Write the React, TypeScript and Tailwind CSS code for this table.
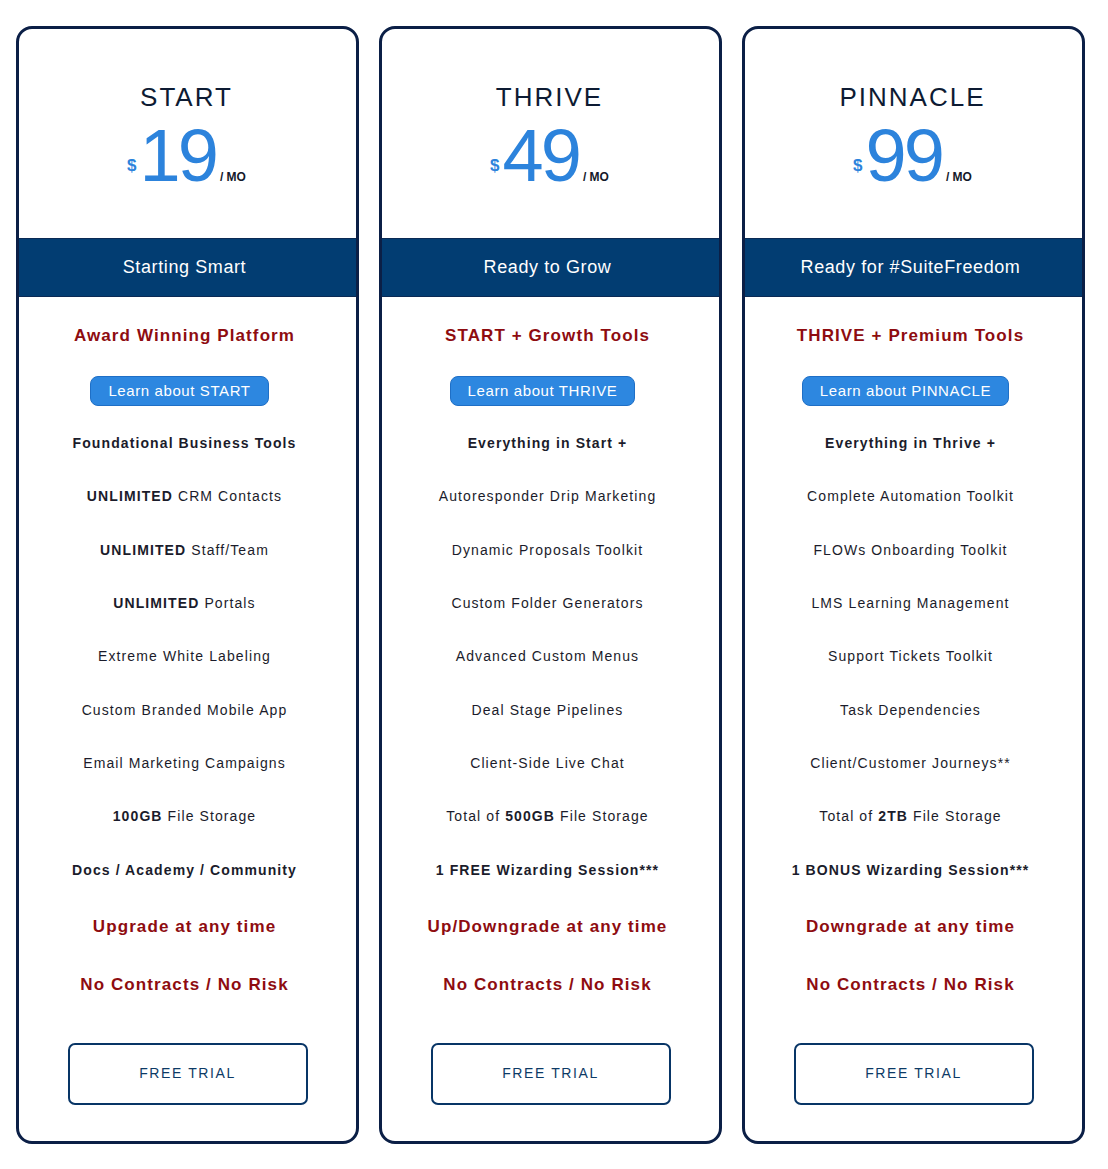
import React from "react";

type Feature = { bold?: string; text?: string; strong?: boolean; after?: string };

interface Plan {
  name: string;
  price: string;
  tagline: string;
  headline: string;
  learn: string;
  features: Feature[];
  footer: string[];
}

const plans: Plan[] = [
  {
    name: "START",
    price: "19",
    tagline: "Starting Smart",
    headline: "Award Winning Platform",
    learn: "Learn about START",
    features: [
      { text: "Foundational Business Tools", strong: true },
      { bold: "UNLIMITED", text: " CRM Contacts" },
      { bold: "UNLIMITED", text: " Staff/Team" },
      { bold: "UNLIMITED", text: " Portals" },
      { text: "Extreme White Labeling" },
      { text: "Custom Branded Mobile App" },
      { text: "Email Marketing Campaigns" },
      { bold: "100GB", text: " File Storage" },
      { text: "Docs / Academy / Community", strong: true },
    ],
    footer: ["Upgrade at any time", "No Contracts / No Risk"],
  },
  {
    name: "THRIVE",
    price: "49",
    tagline: "Ready to Grow",
    headline: "START + Growth Tools",
    learn: "Learn about THRIVE",
    features: [
      { text: "Everything in Start +", strong: true },
      { text: "Autoresponder Drip Marketing" },
      { text: "Dynamic Proposals Toolkit" },
      { text: "Custom Folder Generators" },
      { text: "Advanced Custom Menus" },
      { text: "Deal Stage Pipelines" },
      { text: "Client-Side Live Chat" },
      { text: "Total of ", bold: "500GB", after: " File Storage" },
      { text: "1 FREE Wizarding Session***", strong: true },
    ],
    footer: ["Up/Downgrade at any time", "No Contracts / No Risk"],
  },
  {
    name: "PINNACLE",
    price: "99",
    tagline: "Ready for #SuiteFreedom",
    headline: "THRIVE + Premium Tools",
    learn: "Learn about PINNACLE",
    features: [
      { text: "Everything in Thrive +", strong: true },
      { text: "Complete Automation Toolkit" },
      { text: "FLOWs Onboarding Toolkit" },
      { text: "LMS Learning Management" },
      { text: "Support Tickets Toolkit" },
      { text: "Task Dependencies" },
      { text: "Client/Customer Journeys**" },
      { text: "Total of ", bold: "2TB", after: " File Storage" },
      { text: "1 BONUS Wizarding Session***", strong: true },
    ],
    footer: ["Downgrade at any time", "No Contracts / No Risk"],
  },
];

function FeatureRow({ f }: { f: Feature }) {
  let content: React.ReactNode;
  if (f.after !== undefined) {
    content = (
      <>
        {f.text}
        <b className="font-bold">{f.bold}</b>
        {f.after}
      </>
    );
  } else if (f.bold) {
    content = (
      <>
        <b className="font-bold">{f.bold}</b>
        {f.text}
      </>
    );
  } else {
    content = f.text;
  }
  return (
    <div
      className={`flex h-[53.3px] items-center justify-center text-[14px] tracking-[1.1px] text-[#1b1c2b] ${
        f.strong ? "font-bold" : ""
      }`}
    >
      <span className="whitespace-pre">{content}</span>
    </div>
  );
}

function PlanCard({ plan }: { plan: Plan }) {
  return (
    <div className="flex w-[343px] flex-col overflow-hidden rounded-[16px] border-[3px] border-[#0b1f46] bg-white">
      <div className="flex h-[209px] flex-col items-center pr-[2px] pt-[53px]">
        <div className="text-[26px] leading-[30px] tracking-[2px] text-[#0d1b33]">{plan.name}</div>
        <div className="mt-[7px] flex items-baseline leading-none">
          <span className="mr-[3px] -translate-y-[10px] text-[17px] font-bold text-[#2c83dc]">$</span>
          <span className="text-[74px] tracking-[-3px] text-[#2c83dc]">{plan.price}</span>
          <span className="ml-[4px] text-[12px] font-bold text-[#14182a]">/ MO</span>
        </div>
      </div>
      <div className="flex h-[59px] items-center justify-center border-y border-[#0a2a55] bg-[#023d72] pr-[6px] text-[18px] tracking-[0.6px] text-white">
        {plan.tagline}
      </div>
      <div className="flex flex-col items-center pb-[36px]">
        <div className="mt-[27px] flex w-full flex-col items-center pr-[6px]">
          <div className="text-[17px] font-bold leading-[24px] tracking-[1.1px] text-[#8e0c10]">
            {plan.headline}
          </div>
          <button
            type="button"
            className="mr-[10px] mt-[28px] h-[30px] rounded-[8px] border border-[#1f6fc6] bg-[#2d87e0] px-[17px] text-[15px] tracking-[0.6px] text-white"
          >
            {plan.learn}
          </button>
          <div className="mt-[11px] flex w-full flex-col">
            {plan.features.map((f, i) => (
              <FeatureRow key={i} f={f} />
            ))}
          </div>
          <div className="mt-[1px] flex w-full flex-col">
            {plan.footer.map((t) => (
              <div
                key={t}
                className="flex h-[58px] items-center justify-center text-[17px] font-bold tracking-[1.1px] text-[#8e0c10]"
              >
                {t}
              </div>
            ))}
          </div>
        </div>
        <button
          type="button"
          className="mt-[29px] h-[62px] w-[240px] rounded-[7px] border-2 border-[#083566] bg-white text-[14px] tracking-[1.6px] text-[#0d3a66]"
        >
          FREE TRIAL
        </button>
      </div>
    </div>
  );
}

export default function App() {
  return (
    <div
      className="min-h-screen bg-white pl-[16px] pt-[26px]"
      style={{ fontFamily: '"Liberation Sans", Arial, sans-serif' }}
    >
      <div className="flex gap-[20px]">
        {plans.map((p) => (
          <PlanCard key={p.name} plan={p} />
        ))}
      </div>
    </div>
  );
}
